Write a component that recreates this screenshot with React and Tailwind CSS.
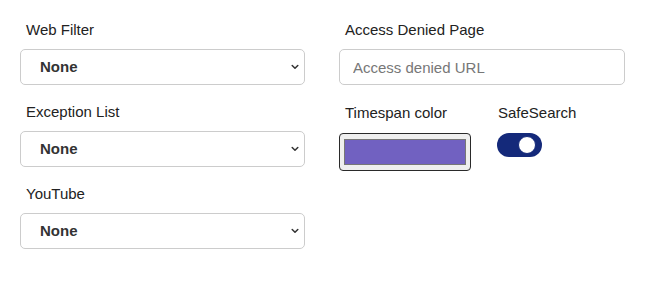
import React from "react";

const font = { fontFamily: '"Liberation Sans", Arial, sans-serif' };

function Chevron() {
  return (
    <svg className="pointer-events-none absolute right-[6px] top-1/2 -translate-y-1/2" width="8" height="6" viewBox="0 0 8 6" fill="none">
      <path d="M1.2 1.5 L4 4.3 L6.8 1.5" stroke="#333" strokeWidth="1.5" strokeLinecap="round" strokeLinejoin="round" />
    </svg>
  );
}

function SelectField({ label }) {
  return (
    <div className="flex flex-col">
      <label className="pl-[6px] text-[15px] leading-[22px] text-[#222] mb-[8px]">{label}</label>
      <div className="relative">
        <select className="appearance-none w-full h-[36px] rounded-[5px] border border-[#ccc] bg-white pl-[19px] pt-[1px] text-[15px] font-bold text-[#333] outline-none" style={font} defaultValue="None">
          <option>None</option>
        </select>
        <Chevron />
      </div>
    </div>
  );
}

export default function App() {
  return (
    <div className="w-[669px] h-[290px] bg-white pt-[19px] pl-[20px] flex gap-[34px]" style={font}>
      <div className="w-[285px] flex flex-col gap-[16px]">
        <SelectField label="Web Filter" />
        <SelectField label="Exception List" />
        <SelectField label="YouTube" />
      </div>
      <div className="w-[286px] flex flex-col gap-[16px]">
        <div className="flex flex-col">
          <label className="pl-[6px] text-[15px] leading-[22px] text-[#222] mb-[8px]">Access Denied Page</label>
          <input
            type="text"
            placeholder="Access denied URL"
            className="w-full h-[36px] rounded-[5px] border border-[#ccc] bg-white pl-[13px] text-[15px] text-[#333] placeholder:text-[#777] outline-none"
            style={font}
          />
        </div>
        <div className="flex">
          <div className="w-[158px] flex flex-col">
            <label className="pl-[6px] text-[15px] leading-[22px] text-[#222] mb-[9px] mt-[1px]">Timespan color</label>
            <div className="w-[132px] h-[38px] rounded-[4px] border border-[#2a2a2a] bg-[#efefef] px-[4px] py-[5px]">
              <div className="w-full h-full border border-[#777] bg-[#7161c1]"></div>
            </div>
          </div>
          <div className="flex flex-col">
            <label className="pl-[1px] text-[15px] leading-[22px] text-[#222] mb-[9px] mt-[1px]">SafeSearch</label>
            <div className="relative w-[45px] h-[24px] rounded-full bg-[#14297a]">
              <div className="absolute left-[21px] top-[3px] w-[18px] h-[18px] rounded-full bg-white border border-[#14297a]"></div>
            </div>
          </div>
        </div>
      </div>
    </div>
  );
}
